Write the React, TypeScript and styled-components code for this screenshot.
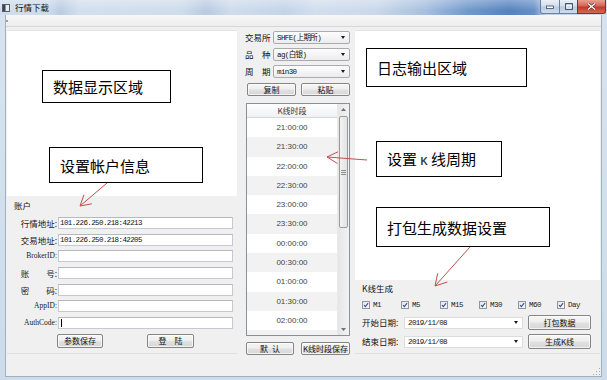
import React from 'react';
import styled, { createGlobalStyle } from 'styled-components';

const UI = `"Noto Sans CJK SC", "Liberation Sans", sans-serif`;
const MONO = `"Liberation Mono", "Noto Sans CJK SC", monospace`;

const GlobalStyle = createGlobalStyle`
  html, body {
    margin: 0;
    padding: 0;
    background: #fff;
  }
  body {
    font-family: ${UI};
  }
`;

const Window = styled.div`
  position: relative;
  width: 607px;
  height: 380px;
  display: flex;
  flex-direction: column;
  overflow: hidden;
  background: linear-gradient(180deg, #d7e3f0 0%, #cddbea 100%);
`;

const TitleBar = styled.div`
  height: 15px;
  flex: none;
  display: flex;
  align-items: center;
  background:
    linear-gradient(180deg, rgba(255, 255, 255, 0.3), rgba(255, 255, 255, 0) 70%),
    linear-gradient(90deg, #d0dded 0%, #cddaeb 8%, #bccde2 10%, #d2dfee 13%, #cfdcec 30%,
      #b9cbe1 34%, #cfdcec 38%, #c4d4e8 47%, #d2deee 52%, #cad8ea 62%, #a7c0df 70%,
      #7299cc 77%, #5582bf 84%, #6990c7 88%, #bfd1e8 90%, #cfdcec 100%);
`;

const TitleText = styled.span`
  margin-left: 5px;
  font: 8.5px/15px ${UI};
  color: #111;
`;

const Caption = styled.div`
  margin-left: auto;
  margin-right: 1px;
  align-self: flex-start;
  display: flex;
`;

const CaptionButton = styled.div<{ $w: number; $close?: boolean }>`
  width: ${p => p.$w}px;
  height: 14px;
  box-sizing: border-box;
  display: flex;
  align-items: center;
  justify-content: center;
  border: 1px solid ${p => (p.$close ? '#8a2b25' : '#6a7f9c')};
  border-top: none;
  margin-left: -1px;
  background: ${p =>
    p.$close
      ? 'linear-gradient(180deg, #e7a18f 0%, #d3675a 45%, #c2392c 55%, #d46a55 100%)'
      : 'linear-gradient(180deg, #eaf0f7 0%, #d3dfec 45%, #b9cbe1 55%, #cddbee 100%)'};
  &:first-child {
    border-bottom-left-radius: 3px;
  }
  &:last-child {
    border-bottom-right-radius: 3px;
  }
`;

const Client = styled.div`
  flex: 1;
  display: flex;
  flex-direction: column;
  margin: 0 5px 3px 5px;
  border: 1px solid #9fb0c3;
  border-top: none;
  background: #f0f0f0;
`;

const ToolStrip = styled.div`
  height: 11px;
  flex: none;
  display: flex;
  align-items: center;
  border-bottom: 1px solid #d7d7d7;
  background: linear-gradient(180deg, #f7f7f7, #eeeeee);
`;

const StripGrip = styled.span`
  width: 2px;
  height: 2px;
  background: #9aa4b0;
`;

const Body = styled.div`
  height: 326px;
  flex: none;
  display: flex;
  gap: 3px;
  padding: 3px 1px 0;
`;

const StatusBar = styled.div`
  flex: 1;
  display: flex;
  justify-content: flex-end;
  align-items: flex-end;
`;

const ResizeGrip = styled.div`
  width: 8px;
  height: 8px;
  margin: 0 1px 1px 0;
  background-image: radial-gradient(circle, #a7a7a7 0.8px, transparent 1px);
  background-size: 3px 3px;
  clip-path: polygon(100% 0, 100% 100%, 0 100%);
`;

/* ---- left column ---- */

const LeftColumn = styled.div`
  width: 230px;
  display: flex;
  flex-direction: column;
`;

const WhiteArea = styled.div<{ $h: number }>`
  height: ${p => p.$h}px;
  flex: none;
  background: #fff;
  border-top: 1px solid #e3e3e3;
  box-sizing: border-box;
`;

const Group = styled.div`
  flex: 1;
  display: flex;
  flex-direction: column;
  border-bottom: 1px solid #dedede;
  margin-bottom: 2px;
`;

const GroupTitle = styled.div<{ $top: number }>`
  margin: ${p => p.$top}px 0 0 7px;
  font: 8.5px/12px ${UI};
  color: #111;
`;

const FieldGrid = styled.div`
  display: grid;
  grid-template-columns: 51px 175px;
  grid-auto-rows: 12px;
  row-gap: 4.7px;
  margin-top: 6px;
`;

const FieldLabel = styled.div<{ $latin?: boolean }>`
  text-align: right;
  padding-right: 1px;
  white-space: pre;
  font: ${p => (p.$latin ? `7.5px/12px "Liberation Serif", serif` : `8.5px/12px ${UI}`)};
  color: #222;
`;

const TextBox = styled.div`
  box-sizing: border-box;
  border: 1px solid #c6c9cf;
  border-top-color: #b5b8be;
  background: #fff;
  padding-left: 1px;
  display: flex;
  align-items: center;
  font: 7.5px/10px ${MONO};
  letter-spacing: -0.6px;
  color: #111;
`;

const Caret = styled.span`
  width: 1px;
  height: 8px;
  margin-left: 1px;
  background: #000;
`;

const ButtonRow = styled.div<{ $gap: number; $left: number; $top: number }>`
  display: flex;
  gap: ${p => p.$gap}px;
  margin: ${p => p.$top}px 0 0 ${p => p.$left}px;
`;

const Button = styled.div<{ $w: number; $h?: number }>`
  width: ${p => p.$w}px;
  height: ${p => p.$h ?? 14}px;
  flex: none;
  box-sizing: border-box;
  border: 1px solid #858585;
  border-radius: 2px;
  background: linear-gradient(180deg, #f6f6f6 0%, #eeeeee 48%, #e1e1e1 52%, #d6d6d6 100%);
  box-shadow: inset 0 0 0 1px rgba(255, 255, 255, 0.7);
  display: flex;
  align-items: center;
  justify-content: center;
  white-space: pre;
  font: 8px/1 ${UI};
  color: #111;
`;

/* ---- middle column ---- */

const MiddleColumn = styled.div`
  width: 112px;
  display: flex;
  flex-direction: column;
`;

const SelectRow = styled.div<{ $top: number }>`
  display: flex;
  align-items: center;
  height: 13px;
  margin: ${p => p.$top}px 2px 0 5px;
`;

const SelectLabel = styled.span`
  width: 28px;
  white-space: pre;
  font: 8.5px/13px ${UI};
  color: #111;
`;

const Combo = styled.div<{ $w: number; $flat?: boolean }>`
  width: ${p => p.$w}px;
  height: ${p => (p.$flat ? 12 : 13)}px;
  flex: none;
  box-sizing: border-box;
  border: 1px solid ${p => (p.$flat ? '#dcdde0' : '#a9abb0')};
  border-radius: ${p => (p.$flat ? 0 : 2)}px;
  background: ${p => (p.$flat ? '#fff' : 'linear-gradient(180deg, #fdfdfd, #ececec)')};
  display: flex;
  align-items: center;
  padding-left: 3px;
  font: 7.5px/10px ${MONO};
  letter-spacing: -0.6px;
  color: #111;
`;

const DropArrow = styled.span`
  margin-left: auto;
  margin-right: 4px;
  width: 0;
  height: 0;
  border-left: 2.5px solid transparent;
  border-right: 2.5px solid transparent;
  border-top: 3px solid #1a1a1a;
`;

const TimeTable = styled.div`
  height: 233px;
  flex: none;
  margin: 7px 2px 0 6px;
  box-sizing: border-box;
  border: 1px solid #8a8f98;
  background: #fff;
  display: flex;
  overflow: hidden;
`;

const TableBody = styled.div`
  flex: 1;
  display: flex;
  flex-direction: column;
  overflow: hidden;
`;

const TableHeader = styled.div`
  height: 13px;
  flex: none;
  border-bottom: 1px solid #d5d7da;
  background: linear-gradient(180deg, #ffffff, #f0f1f3);
  text-align: center;
  font: 8px/13px ${UI};
  color: #333;
`;

const TimeRow = styled.div<{ $alt: boolean }>`
  height: 19.3px;
  flex: none;
  background: ${p => (p.$alt ? '#f2f2f2' : '#fff')};
  text-align: center;
  font: 8px/19.3px "Liberation Sans", sans-serif;
  color: #444;
`;

const ScrollBar = styled.div`
  width: 11px;
  flex: none;
  display: flex;
  flex-direction: column;
  background: linear-gradient(90deg, #e6e6e6, #f2f2f2);
  border-left: 1px solid #e9e9e9;
`;

const ScrollButton = styled.div`
  height: 11px;
  flex: none;
  display: flex;
  align-items: center;
  justify-content: center;
`;

const ScrollThumb = styled.div`
  height: 112px;
  flex: none;
  margin: 1px 1px 0;
  box-sizing: border-box;
  border: 1px solid #9a9a9a;
  border-radius: 2px;
  background: linear-gradient(90deg, #f3f3f3, #e2e2e2);
  display: flex;
  align-items: center;
  justify-content: center;
`;

const ScrollSpacer = styled.div`
  flex: 1;
`;

/* ---- right column ---- */

const RightColumn = styled.div`
  width: 245px;
  display: flex;
  flex-direction: column;
`;

const CheckRow = styled.div`
  display: flex;
  height: 10px;
  margin: 6px 0 0 7px;
`;

const CheckItem = styled.div`
  width: 39px;
  display: flex;
  align-items: center;
  gap: 3px;
  font: 7.5px/10px ${MONO};
  letter-spacing: -0.5px;
  color: #222;
`;

const DateRow = styled.div<{ $top: number }>`
  display: flex;
  align-items: center;
  gap: 5px;
  height: 15px;
  margin: ${p => p.$top}px 0 0 7px;
`;

const DateLabel = styled.span`
  width: 37px;
  font: 8.5px/15px ${UI};
  color: #111;
`;

/* ---- annotations over the screenshot ---- */

const Note = styled.div<{ $x: number; $y: number; $w: number; $h: number }>`
  position: absolute;
  left: ${p => p.$x}px;
  top: ${p => p.$y}px;
  width: ${p => p.$w}px;
  height: ${p => p.$h}px;
  box-sizing: border-box;
  border: 1px solid #000;
  background: #fff;
  display: flex;
  align-items: center;
  padding-left: 10px;
  white-space: pre;
  font: 15px/1 ${UI};
  color: #000;
`;

const NoteK = styled.span`
  font: 700 10px/1 "Liberation Sans", sans-serif;
  color: #2d3a4a;
`;

const ArrowLayer = styled.svg`
  position: absolute;
  left: 0;
  top: 0;
  pointer-events: none;
`;

const fields: { label: string; latin?: boolean; value?: string; caret?: boolean }[] = [
  { label: '行情地址:', value: '101.226.250.218:42213' },
  { label: '交易地址:', value: '101.226.250.218:42205' },
  { label: 'BrokerID:', latin: true },
  { label: '账\u3000\u3000号:' },
  { label: '密\u3000\u3000码:' },
  { label: 'AppID:', latin: true },
  { label: 'AuthCode:', latin: true, caret: true },
];

const times = [
  '21:00:00', '21:30:00', '22:00:00', '22:30:00', '23:00:00', '23:30:00',
  '00:00:00', '00:30:00', '01:00:00', '01:30:00', '02:00:00', '02:30:00',
];

const periods = ['M1', 'M5', 'M15', 'M30', 'M60', 'Day'];

function AppIcon() {
  return (
    <svg width="8" height="8" viewBox="0 0 8 8" style={{ marginLeft: 2 }}>
      <rect x="0.5" y="0.5" width="7" height="7" fill="#e9edf2" stroke="#56606c" />
      <rect x="1" y="1" width="2.5" height="6" fill="#3c4450" />
    </svg>
  );
}

function CheckBox() {
  return (
    <svg width="8" height="8" viewBox="0 0 8 8">
      <defs>
        <linearGradient id="cb" x1="0" y1="0" x2="1" y2="1">
          <stop offset="0" stopColor="#dfe6ee" />
          <stop offset="1" stopColor="#f8f9fb" />
        </linearGradient>
      </defs>
      <rect x="0.5" y="0.5" width="7" height="7" fill="url(#cb)" stroke="#8e96a0" />
      <path d="M2 4.2 L3.4 5.7 L6.1 2.2" fill="none" stroke="#3b4f8a" strokeWidth="1.1" />
    </svg>
  );
}

function Triangle({ up }: { up?: boolean }) {
  return (
    <svg width="5" height="3" viewBox="0 0 5 3">
      <path d={up ? 'M0 3 L2.5 0 L5 3 Z' : 'M0 0 L2.5 3 L5 0 Z'} fill="#707070" />
    </svg>
  );
}

function ThumbGrip() {
  return (
    <svg width="5" height="5" viewBox="0 0 5 5">
      <path d="M0 0.5 H5 M0 2.5 H5 M0 4.5 H5" stroke="#8a8a8a" strokeWidth="1" />
    </svg>
  );
}

export default function App() {
  return (
    <>
      <GlobalStyle />
      <Window>
        <TitleBar>
          <AppIcon />
          <TitleText>行情下载</TitleText>
          <Caption>
            <CaptionButton $w={20}>
              <svg width="8" height="4" viewBox="0 0 8 4">
                <rect x="0.5" y="1" width="7" height="2.5" fill="#fff" stroke="#3c4b60" strokeWidth="0.8" />
              </svg>
            </CaptionButton>
            <CaptionButton $w={19}>
              <svg width="8" height="7" viewBox="0 0 8 7">
                <rect x="0.7" y="0.7" width="6.6" height="5.6" fill="none" stroke="#3c4b60" strokeWidth="1.2" />
                <rect x="1.8" y="2.2" width="4.4" height="3" fill="none" stroke="#fff" strokeWidth="1" />
              </svg>
            </CaptionButton>
            <CaptionButton $w={29} $close>
              <svg width="9" height="7" viewBox="0 0 9 7">
                <path d="M1 0.5 L8 6.5 M8 0.5 L1 6.5" stroke="#5a1a14" strokeWidth="2.4" />
                <path d="M1 0.5 L8 6.5 M8 0.5 L1 6.5" stroke="#fff" strokeWidth="1.4" />
              </svg>
            </CaptionButton>
          </Caption>
        </TitleBar>

        <Client>
          <ToolStrip>
            <StripGrip />
          </ToolStrip>

          <Body>
            <LeftColumn>
              <WhiteArea $h={166} />
              <Group>
                <GroupTitle $top={3}>账户</GroupTitle>
                <FieldGrid>
                  {fields.map(f => (
                    <React.Fragment key={f.label}>
                      <FieldLabel $latin={f.latin}>{f.label}</FieldLabel>
                      <TextBox>
                        {f.caret && <Caret />}
                        {f.value}
                      </TextBox>
                    </React.Fragment>
                  ))}
                </FieldGrid>
                <ButtonRow $gap={44} $left={50} $top={5}>
                  <Button $w={46}>参数保存</Button>
                  <Button $w={47}>{'登\u3000陆'}</Button>
                </ButtonRow>
              </Group>
            </LeftColumn>

            <MiddleColumn>
              <SelectRow $top={1}>
                <SelectLabel>交易所</SelectLabel>
                <Combo $w={77}>
                  SHFE(上期所)
                  <DropArrow />
                </Combo>
              </SelectRow>
              <SelectRow $top={4}>
                <SelectLabel>{'品\u2002\u2002种'}</SelectLabel>
                <Combo $w={77}>
                  ag(白银)
                  <DropArrow />
                </Combo>
              </SelectRow>
              <SelectRow $top={4}>
                <SelectLabel>{'周\u2002\u2002期'}</SelectLabel>
                <Combo $w={77}>
                  min30
                  <DropArrow />
                </Combo>
              </SelectRow>
              <ButtonRow $gap={5} $left={7} $top={5}>
                <Button $w={49} $h={13}>复制</Button>
                <Button $w={49} $h={13}>粘贴</Button>
              </ButtonRow>
              <TimeTable>
                <TableBody>
                  <TableHeader>K线时段</TableHeader>
                  {times.map((t, i) => (
                    <TimeRow key={t} $alt={i % 2 === 1}>{t}</TimeRow>
                  ))}
                </TableBody>
                <ScrollBar>
                  <ScrollButton><Triangle up /></ScrollButton>
                  <ScrollThumb><ThumbGrip /></ScrollThumb>
                  <ScrollSpacer />
                  <ScrollButton><Triangle /></ScrollButton>
                </ScrollBar>
              </TimeTable>
              <ButtonRow $gap={7} $left={6} $top={6}>
                <Button $w={48} $h={13}>{'默\u2002认'}</Button>
                <Button $w={49} $h={13}>K线时段保存</Button>
              </ButtonRow>
            </MiddleColumn>

            <RightColumn>
              <WhiteArea $h={250} />
              <Group>
                <GroupTitle $top={2}>K线生成</GroupTitle>
                <CheckRow>
                  {periods.map(p => (
                    <CheckItem key={p}>
                      <CheckBox />
                      {p}
                    </CheckItem>
                  ))}
                </CheckRow>
                <DateRow $top={5}>
                  <DateLabel>开始日期:</DateLabel>
                  <Combo $w={119} $flat>
                    2019/11/08
                    <DropArrow />
                  </Combo>
                  <Button $w={63} $h={15}>打包数据</Button>
                </DateRow>
                <DateRow $top={4}>
                  <DateLabel>结束日期:</DateLabel>
                  <Combo $w={119} $flat>
                    2019/11/08
                    <DropArrow />
                  </Combo>
                  <Button $w={63} $h={15}>生成K线</Button>
                </DateRow>
              </Group>
            </RightColumn>
          </Body>

          <StatusBar>
            <ResizeGrip />
          </StatusBar>
        </Client>

        <Note $x={42} $y={70} $w={129} $h={33}>数据显示区域</Note>
        <Note $x={49} $y={147} $w={154} $h={36}>设置帐户信息</Note>
        <Note $x={366} $y={48} $w={161} $h={39}>日志输出区域</Note>
        <Note $x={376} $y={141} $w={126} $h={36}>
          <span>
            设置 <NoteK>K</NoteK> 线周期
          </span>
        </Note>
        <Note $x={376} $y={207} $w={174} $h={40}>打包生成数据设置</Note>

        <ArrowLayer width={607} height={380} viewBox="0 0 607 380">
          <g stroke="#c0504d" strokeWidth="1" fill="none">
            <path d="M107 183 L80 206 M80 206 L91.8 203.8 M80 206 L84 194.7" />
            <path d="M367 160 L327 157 M327 157 L337.5 163.5 M327 157 L338 151.8" />
            <path d="M470 247 L435 286 M435 286 L447.4 282 M435 286 L437.7 273.3" />
          </g>
        </ArrowLayer>
      </Window>
    </>
  );
}
